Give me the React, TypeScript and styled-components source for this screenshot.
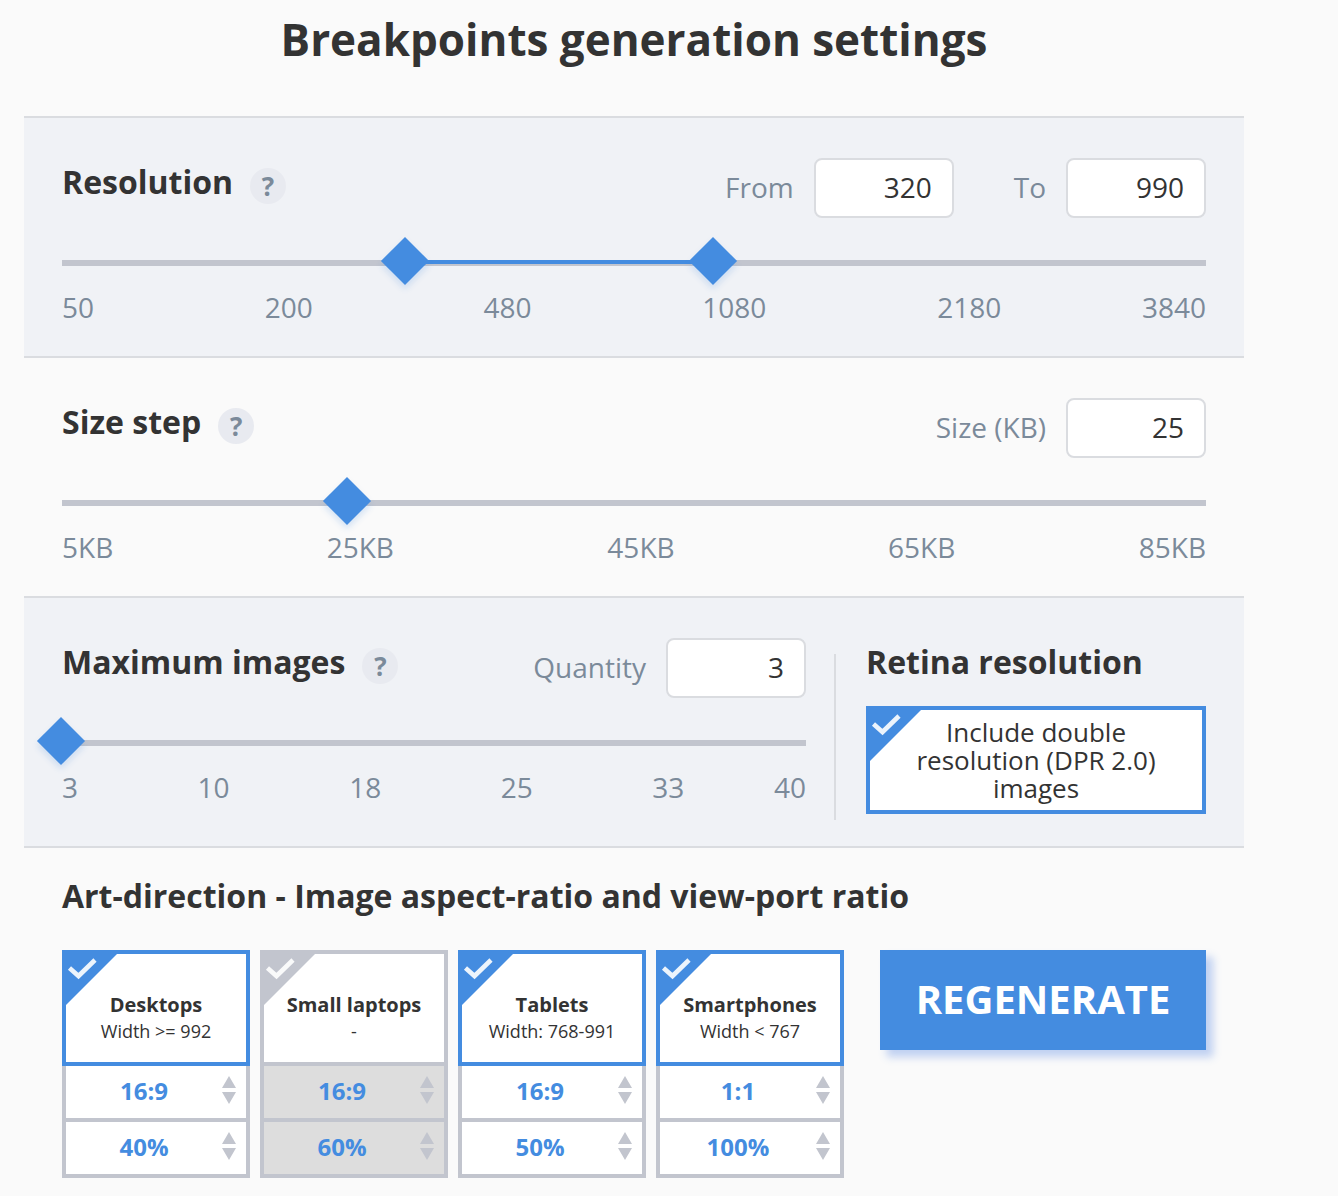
import React, { useState } from "react";
import styled, { createGlobalStyle, css } from "styled-components";

const blue = "#448ce0";
const grey = "#c2c5ce";
const slate = "#7b8a9a";
const ink = "#333333";
const line = "#dadce0";

const GlobalStyle = createGlobalStyle`
  *, *::before, *::after { box-sizing: border-box; }
  body {
    margin: 0;
    background: #fafafa;
    color: ${ink};
    font-family: "Open Sans", "Noto Sans", sans-serif;
    font-size: 28px;
    line-height: 40px;
  }
  h1, h2, p { margin: 0; }
`;

const Page = styled.main`
  padding: 0 94px 18px 24px;
`;

const Title = styled.h1`
  padding: 10px 0 48px;
  font-size: 44px;
  line-height: 58px;
  font-weight: 700;
  text-align: center;
`;

const Panel = styled.section<{ $shaded?: boolean }>`
  padding: 40px 38px 28px;
  ${(p) =>
    p.$shaded &&
    css`
      background: #f0f2f6;
      border-top: 2px solid ${line};
      border-bottom: 2px solid ${line};
    `}
`;

const SplitPanel = styled(Panel)`
  display: flex;
  padding-bottom: 26px;
`;

const Main = styled.div`
  flex: 1;
  min-width: 0;
`;

const Divider = styled.div`
  width: 2px;
  margin: 16px 30px 0 28px;
  background: ${line};
`;

const Aside = styled.div`
  display: flex;
  flex-direction: column;
  gap: 20px;
  width: 340px;
  padding-bottom: 6px;
`;

const Head = styled.div`
  display: flex;
  justify-content: space-between;
`;

const HeadLeft = styled.div`
  display: flex;
  align-items: flex-start;
  gap: 17px;
`;

const Heading = styled.h2`
  font-size: 32px;
  line-height: 48px;
  font-weight: 700;
`;

const Help = styled.button`
  width: 36px;
  height: 36px;
  margin: 10px 0 0;
  padding: 0;
  border: 0;
  border-radius: 50%;
  background: #e8eaf0;
  color: ${slate};
  font: 700 26px/36px "Open Sans", sans-serif;
  cursor: pointer;
`;

const Fields = styled.div`
  display: flex;
  gap: 60px;
`;

const FieldLabel = styled.label`
  display: flex;
  align-items: center;
  gap: 20px;
  color: ${slate};
`;

const FieldText = styled.span`
  padding-bottom: 2px;
`;

const NumberBox = styled.input`
  width: 140px;
  height: 60px;
  padding: 0 20px 2px;
  border: 2px solid ${line};
  border-radius: 8px;
  background: #fff;
  color: ${ink};
  font: inherit;
  text-align: right;
`;

const Slider = styled.div`
  display: grid;
  align-items: center;
  height: 34px;
  margin-top: 26px;
`;

const Track = styled.div`
  grid-area: 1 / 1;
  height: 6px;
  margin-top: 4px;
  background: ${grey};
`;

const Fill = styled.div`
  height: 4px;
  background: ${blue};
`;

const Range = styled.input`
  grid-area: 1 / 1;
  appearance: none;
  width: calc(100% + 34px);
  height: 34px;
  margin: 0 -18px;
  background: none;
  pointer-events: none;
  &::-webkit-slider-thumb {
    appearance: none;
    width: 34px;
    height: 34px;
    border: 0;
    border-radius: 0;
    background: ${blue};
    box-shadow: 3px 3px 6px rgba(68, 140, 224, 0.2);
    transform: rotate(45deg);
    pointer-events: auto;
    cursor: pointer;
  }
`;

const Scale = styled.div`
  display: flex;
  justify-content: space-between;
  padding: 9px 0 1px;
  color: ${slate};
  & > :last-child {
    margin-left: -30px;
  }
`;

const checkInput = css`
  position: absolute;
  inset: 0;
  width: 100%;
  height: 100%;
  margin: 0;
  opacity: 0;
  cursor: pointer;
`;

const Corner = styled.svg`
  position: absolute;
  top: -4px;
  left: -4px;
  width: 60px;
  height: 60px;
  fill: ${grey};
`;

const tickBox = css`
  position: relative;
  display: flex;
  flex-direction: column;
  align-items: center;
  border: 4px solid ${grey};
  background: #fff;
  text-align: center;
  &:has(input:checked) {
    border-color: ${blue};
  }
  &:has(input:checked) ${Corner} {
    fill: ${blue};
  }
`;

const Tick = styled.input`
  ${checkInput}
`;

const RetinaBox = styled.label`
  ${tickBox}
  padding: 8px 40px;
  font-size: 26px;
  line-height: 28px;
`;

const Art = styled.section`
  padding: 24px 38px 0;
`;

const ArtBody = styled.div`
  display: grid;
  grid-template-columns: minmax(0, 1fr) 326px;
  align-items: start;
  gap: 36px;
  padding-top: 30px;
`;

const Cards = styled.div`
  display: grid;
  grid-template-columns: repeat(4, minmax(0, 1fr));
  gap: 10px;
`;

const DeviceHead = styled.label`
  ${tickBox}
  height: 116px;
  padding-top: 37px;
  font-size: 18px;
  line-height: 24px;
  white-space: nowrap;
`;

const DeviceName = styled.strong`
  font-size: 20px;
  line-height: 28px;
`;

const SelectCell = styled.div<{ $off: boolean }>`
  display: grid;
  align-items: center;
  border: solid ${grey};
  border-width: 0 4px 4px;
  background: ${(p) => (p.$off ? "#dddddd" : "#ffffff")};
`;

const Choice = styled.select`
  grid-area: 1 / 1;
  appearance: none;
  width: 100%;
  height: 52px;
  padding: 0 24px 2px 0;
  border: 0;
  border-radius: 0;
  background: none;
  color: ${blue};
  font: 700 24px/32px "Open Sans", sans-serif;
  text-align: center;
  text-align-last: center;
  &:disabled {
    color: ${blue};
    opacity: 1;
  }
`;

const Arrows = styled.svg`
  grid-area: 1 / 1;
  justify-self: end;
  width: 14px;
  height: 28px;
  margin: 0 10px 4px 0;
  fill: ${grey};
  pointer-events: none;
`;

const Regenerate = styled.button`
  height: 100px;
  padding: 0 0 2px;
  border: 0;
  background: ${blue};
  box-shadow: 7px 7px 8px rgba(68, 120, 224, 0.32);
  color: #fff;
  font: 700 40px/56px "Open Sans", sans-serif;
  cursor: pointer;
`;

const stops = [
  [50, 0],
  [200, 232],
  [480, 393],
  [1080, 601],
  [2180, 800],
  [3840, 1000],
];

/** Interpolates along the resolution scale; `from`/`to` pick the column to read and to return. */
function convert(value: number, from: 0 | 1, to: 0 | 1) {
  const i = Math.max(1, stops.findIndex((s) => s[from] >= value));
  const [a, b] = [stops[i - 1], stops[i]];
  const t = (value - a[from]) / (b[from] - a[from]);
  return Math.round(a[to] + t * (b[to] - a[to]));
}

const clamp = (n: number, lo: number, hi: number) => Math.min(hi, Math.max(lo, n));

function Field(props: { label: string; value: number; onChange: (n: number) => void }) {
  return (
    <FieldLabel>
      <FieldText>{props.label}</FieldText>
      <NumberBox
        inputMode="numeric"
        value={props.value}
        onChange={(e) => props.onChange(Number(e.target.value) || 0)}
      />
    </FieldLabel>
  );
}

function PanelHead(props: { title: string; children: React.ReactNode }) {
  return (
    <Head>
      <HeadLeft>
        <Heading>{props.title}</Heading>
        <Help type="button" aria-label={`Help: ${props.title}`}>
          ?
        </Help>
      </HeadLeft>
      <Fields>{props.children}</Fields>
    </Head>
  );
}

function Marks({ items }: { items: string[] }) {
  return (
    <Scale>
      {items.map((t) => (
        <span key={t}>{t}</span>
      ))}
    </Scale>
  );
}

function TickCorner() {
  return (
    <Corner viewBox="0 0 60 60" aria-hidden="true">
      <path d="M0 0H59L0 59Z" />
      <path
        d="M7.5 18L16.5 26L33 10"
        fill="none"
        stroke="#fff"
        strokeOpacity="0.9"
        strokeWidth="4.6"
      />
    </Corner>
  );
}

const ratios = ["16:9", "4:3", "1:1"];
const shares = ["100%", "60%", "50%", "40%"];

function Picker(props: { label: string; value: string; options: string[]; off: boolean }) {
  return (
    <SelectCell $off={props.off}>
      <Choice aria-label={props.label} defaultValue={props.value} disabled={props.off}>
        {props.options.map((o) => (
          <option key={o}>{o}</option>
        ))}
      </Choice>
      <Arrows viewBox="0 0 14 28" aria-hidden="true">
        <path d="M7 0L14 12H0ZM0 16H14L7 28Z" />
      </Arrows>
    </SelectCell>
  );
}

type DeviceInfo = { name: string; note: string; ratio: string; share: string; on: boolean };

const devices: DeviceInfo[] = [
  { name: "Desktops", note: "Width >= 992", ratio: "16:9", share: "40%", on: true },
  { name: "Small laptops", note: "-", ratio: "16:9", share: "60%", on: false },
  { name: "Tablets", note: "Width: 768-991", ratio: "16:9", share: "50%", on: true },
  { name: "Smartphones", note: "Width < 767", ratio: "1:1", share: "100%", on: true },
];

function Device({ device }: { device: DeviceInfo }) {
  const [on, setOn] = useState(device.on);
  return (
    <div>
      <DeviceHead>
        <Tick type="checkbox" checked={on} onChange={(e) => setOn(e.target.checked)} />
        <TickCorner />
        <DeviceName>{device.name}</DeviceName>
        <span>{device.note}</span>
      </DeviceHead>
      <Picker label={`${device.name} aspect ratio`} value={device.ratio} options={ratios} off={!on} />
      <Picker label={`${device.name} view-port ratio`} value={device.share} options={shares} off={!on} />
    </div>
  );
}

export default function App() {
  const [from, setFrom] = useState(320);
  const [to, setTo] = useState(990);
  const [size, setSize] = useState(25);
  const [count, setCount] = useState(3);
  const start = convert(clamp(from, 50, 3840), 0, 1);
  const end = convert(clamp(to, 50, 3840), 0, 1);

  return (
    <>
      <GlobalStyle />
      <Page>
        <Title>Breakpoints generation settings</Title>

        <Panel $shaded>
          <PanelHead title="Resolution">
            <Field label="From" value={from} onChange={setFrom} />
            <Field label="To" value={to} onChange={setTo} />
          </PanelHead>
          <Slider>
            <Track>
              <Fill style={{ marginLeft: `${start / 10}%`, width: `${Math.max(0, end - start) / 10}%` }} />
            </Track>
            <Range
              type="range"
              aria-label="Minimum resolution"
              aria-valuetext={String(from)}
              min={0}
              max={1000}
              value={start}
              onChange={(e) => setFrom(Math.min(to, convert(Number(e.target.value), 1, 0)))}
            />
            <Range
              type="range"
              aria-label="Maximum resolution"
              aria-valuetext={String(to)}
              min={0}
              max={1000}
              value={end}
              onChange={(e) => setTo(Math.max(from, convert(Number(e.target.value), 1, 0)))}
            />
          </Slider>
          <Marks items={["50", "200", "480", "1080", "2180", "3840"]} />
        </Panel>

        <Panel>
          <PanelHead title="Size step">
            <Field label="Size (KB)" value={size} onChange={setSize} />
          </PanelHead>
          <Slider>
            <Track />
            <Range
              type="range"
              aria-label="Size step"
              min={5}
              max={85}
              value={size}
              onChange={(e) => setSize(Number(e.target.value))}
            />
          </Slider>
          <Marks items={["5KB", "25KB", "45KB", "65KB", "85KB"]} />
        </Panel>

        <SplitPanel $shaded>
          <Main>
            <PanelHead title="Maximum images">
              <Field label="Quantity" value={count} onChange={setCount} />
            </PanelHead>
            <Slider>
              <Track />
              <Range
                type="range"
                aria-label="Maximum images"
                min={3}
                max={40}
                value={count}
                onChange={(e) => setCount(Number(e.target.value))}
              />
            </Slider>
            <Marks items={["3", "10", "18", "25", "33", "40"]} />
          </Main>
          <Divider />
          <Aside>
            <Heading>Retina resolution</Heading>
            <RetinaBox>
              <Tick type="checkbox" defaultChecked />
              <TickCorner />
              <span>Include double resolution (DPR 2.0) images</span>
            </RetinaBox>
          </Aside>
        </SplitPanel>

        <Art>
          <Heading>Art-direction - Image aspect-ratio and view-port ratio</Heading>
          <ArtBody>
            <Cards>
              {devices.map((d) => (
                <Device key={d.name} device={d} />
              ))}
            </Cards>
            <Regenerate type="button">REGENERATE</Regenerate>
          </ArtBody>
        </Art>
      </Page>
    </>
  );
}
